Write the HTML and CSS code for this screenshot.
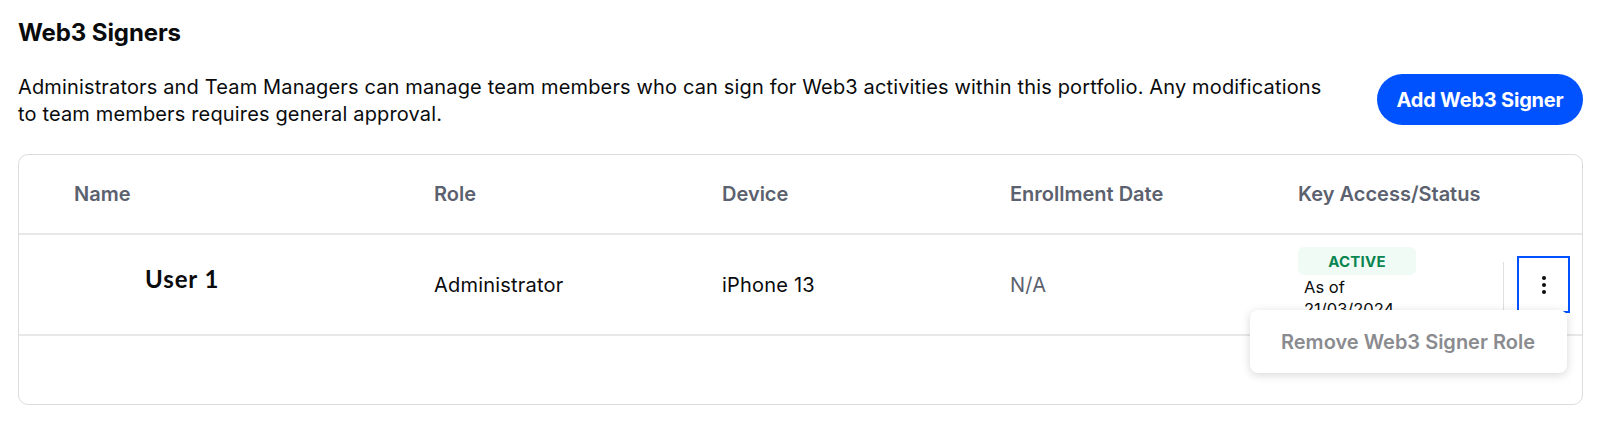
FILE: index.html
```html
<!DOCTYPE html>
<html lang="en">
<head>
<meta charset="utf-8">
<title>Web3 Signers</title>
<link rel="stylesheet" href="styles.css">
</head>
<body>
<main class="page">
  <h2 class="title">Web3 Signers</h2>
  <section class="intro">
    <p class="intro-text">Administrators and Team Managers can manage team members who can sign for Web3 activities within this portfolio. Any modifications to team members requires general approval.</p>
    <button class="primary-btn" type="button">Add Web3 Signer</button>
  </section>
  <section class="card">
    <div class="grid head">
      <div class="th">Name</div>
      <div class="th">Role</div>
      <div class="th">Device</div>
      <div class="th">Enrollment Date</div>
      <div class="th">Key Access/Status</div>
    </div>
    <div class="grid row">
      <div class="td name">User 1</div>
      <div class="td">Administrator</div>
      <div class="td">iPhone 13</div>
      <div class="td muted">N/A</div>
      <div class="td status-cell">
        <div class="status">
          <span class="badge">ACTIVE</span>
          <span class="as-of">As of 21/03/2024</span>
        </div>
        <div class="sep"></div>
        <div class="actions">
          <button class="kebab" type="button" aria-label="More actions">
            <svg width="6" height="20" viewBox="0 0 6 20"><circle cx="3" cy="3" r="2" fill="#0a0b0d"/><circle cx="3" cy="10" r="2" fill="#0a0b0d"/><circle cx="3" cy="17" r="2" fill="#0a0b0d"/></svg>
          </button>
          <div class="menu">Remove Web3 Signer Role</div>
        </div>
      </div>
    </div>
    <div class="empty"></div>
  </section>
</main>
</body>
</html>
```

FILE: styles.css
```css
* { box-sizing: border-box; }
html, body { margin: 0; padding: 0; background: #ffffff; }
body {
  font-family: Inter, "Noto Sans", "Liberation Sans", sans-serif;
  color: #0a0b0d;
}
.page {
  padding: 18px 17px 0 18px;
}
.title {
  margin: 0;
  font-size: 24px;
  line-height: 30px;
  font-weight: 700;
  letter-spacing: -0.1px;
}
.intro {
  display: flex;
  align-items: flex-start;
  justify-content: space-between;
  margin-top: 26px;
}
.intro-text {
  margin: 0;
  width: 1316px;
  font-size: 20px;
  letter-spacing: 0.15px;
  line-height: 27px;
}
.primary-btn {
  width: 206px;
  height: 51px;
  border: none;
  border-radius: 26px;
  background: #0052ff;
  color: #ffffff;
  font-family: Inter, "Noto Sans", sans-serif;
  font-size: 20px;
  font-weight: 700;
  letter-spacing: -0.2px;
  padding: 0;
}
.card {
  margin-top: 26px;
  border: 1px solid #dcdcdc;
  border-radius: 10px;
}
.grid {
  display: grid;
  grid-template-columns: 360px 288px 288px 288px 1fr;
  padding-left: 55px;
}
.head {
  height: 80px;
  border-bottom: 2px solid #e8e8e8;
  align-items: center;
}
.th {
  font-size: 20px;
  font-weight: 600;
  color: #5b616e;
}
.row {
  height: 101px;
  border-bottom: 2px solid #e8e8e8;
  align-items: center;
}
.td {
  font-size: 20px;
  letter-spacing: 0.2px;
  color: #0a0b0d;
}
.td.name {
  padding-left: 71px;
  margin-bottom: 12px;
  font-family: Lato, "Open Sans", sans-serif;
  font-weight: 700;
  font-size: 24px;
  letter-spacing: 0.9px;
}
.td.muted { color: #5b616e; }
.status-cell {
  align-self: stretch;
  display: flex;
  align-items: flex-start;
  padding-right: 12px;
  letter-spacing: 0;
}
.status {
  width: 118px;
  padding-top: 12px;
  display: flex;
  flex-direction: column;
}
.badge {
  height: 28px;
  border-radius: 6px;
  background: #f1fbf5;
  color: #098551;
  font-size: 15px;
  font-weight: 700;
  letter-spacing: 0.2px;
  display: flex;
  align-items: center;
  justify-content: center;
}
.as-of {
  padding-left: 6px;
  font-size: 16.5px;
  line-height: 22px;
  margin-top: 1px;
}
.sep {
  width: 1px;
  align-self: stretch;
  margin: 27px 0 0 87px;
  background: #e0e0e0;
}
.actions {
  position: relative;
  margin-left: 13px;
  padding-top: 21px;
}
.kebab {
  width: 53px;
  height: 57px;
  border: 2px solid #0052ff;
  background: #ffffff;
  display: flex;
  align-items: center;
  justify-content: center;
  padding: 0;
}
.menu {
  position: absolute;
  top: 75px;
  right: 3px;
  width: 317px;
  height: 63px;
  padding-left: 31px;
  display: flex;
  align-items: center;
  background: #ffffff;
  border-radius: 8px;
  box-shadow: 0 2px 10px rgba(0, 0, 0, 0.16);
  font-size: 20px;
  font-weight: 600;
  color: #8a8b8f;
  white-space: nowrap;
  z-index: 2;
}
.empty {
  height: 68px;
}
```
